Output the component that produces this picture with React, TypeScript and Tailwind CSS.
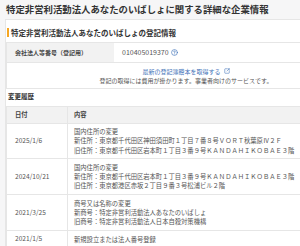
import { CircleHelp, SquareArrowOutUpRight } from "lucide-react";

const history = [
  {
    date: "2025/1/6",
    lines: [
      "国内住所の変更",
      "新住所：東京都千代田区神田須田町１丁目７番８号ＶＯＲＴ秋葉原Ⅳ２Ｆ",
      "旧住所：東京都千代田区岩本町１丁目３番９号ＫＡＮＤＡＨＩＫＯＢＡＥ３階",
    ],
  },
  {
    date: "2024/10/21",
    lines: [
      "国内住所の変更",
      "新住所：東京都千代田区岩本町１丁目３番９号ＫＡＮＤＡＨＩＫＯＢＡＥ３階",
      "旧住所：東京都港区赤坂２丁目９番３号松浦ビル２階",
    ],
  },
  {
    date: "2021/3/25",
    lines: [
      "商号又は名称の変更",
      "新商号：特定非営利活動法人あなたのいばしょ",
      "旧商号：特定非営利活動法人日本自殺対策機構",
    ],
  },
  {
    date: "2021/1/5",
    lines: ["新規設立または法人番号登録"],
  },
];

export default function App() {
  return (
    <div
      className="w-[300px] h-[246px] overflow-hidden bg-[#f6f6f7] text-[#333]"
      style={{ fontFamily: '"Noto Sans CJK JP", "Noto Sans", sans-serif' }}
    >
      {/* ページ見出し */}
      <div className="h-[19px] flex items-center px-[6px]">
        <h1 className="text-[9.4px] font-bold whitespace-nowrap leading-none">
          特定非営利活動法人あなたのいばしょに関する詳細な企業情報
        </h1>
      </div>

      <div className="ml-[5px] w-[400px] bg-white border-l border-t border-[#e6e6e6] pl-px pt-[8px] pb-[20px]">
        {/* 登記情報 */}
        <div className="flex items-center h-[9px] border-l-2 border-[#f5a623] pl-[2px] mb-[5px]">
          <h2 className="text-[7.5px] font-bold whitespace-nowrap leading-none">
            特定非営利活動法人あなたのいばしょの登記情報
          </h2>
        </div>

        <div className="w-[360px] border border-[#e6e6e6] -ml-px">
          <div className="flex h-[20px] border-b border-[#e6e6e6]">
            <div className="w-[107px] bg-[#f2f2f2] flex items-center pl-[8px] text-[6px] font-bold text-[#444] whitespace-nowrap">
              会社法人等番号（登記用）
            </div>
            <div className="flex items-center pl-[8px] gap-[2px] text-[7px] text-[#555]">
              010405019370
              <CircleHelp size={7} strokeWidth={2.2} className="text-[#3f72b8]" />
            </div>
          </div>
          <div className="h-[25px] flex flex-col items-center justify-center text-[6px] leading-[9px]">
            <div className="flex items-center gap-[3px] text-[#3f72b8] whitespace-nowrap">
              最新の登記簿謄本を取得する
              <SquareArrowOutUpRight size={6} strokeWidth={2.2} />
            </div>
            <div className="text-[#555] whitespace-nowrap">
              登記の取得には費用が掛かります。事業者向けのサービスです。
            </div>
          </div>
        </div>

        {/* 変更履歴 */}
        <h3 className="text-[6.5px] font-bold leading-none mt-[4px] mb-[6px] pl-px">変更履歴</h3>

        <table className="w-[360px] -ml-px border-collapse text-[6.3px] text-[#555]">
          <thead>
            <tr className="bg-[#f2f2f2] h-[17px]">
              <th className="w-[61px] border border-[#e6e6e6] text-left pl-[8px] font-bold text-[#444]">日付</th>
              <th className="border border-[#e6e6e6] text-left pl-[6px] font-bold text-[#444]">内容</th>
            </tr>
          </thead>
          <tbody>
            {history.map((h) => (
              <tr key={h.date}>
                <td className="border border-[#e6e6e6] pl-[8px] align-middle whitespace-nowrap text-[6.6px]">{h.date}</td>
                <td className="border border-[#e6e6e6] pl-[6px] py-[3.5px] leading-[9.3px] whitespace-nowrap">
                  {h.lines.map((l) => (
                    <div key={l}>{l}</div>
                  ))}
                </td>
              </tr>
            ))}
          </tbody>
        </table>
      </div>
    </div>
  );
}
